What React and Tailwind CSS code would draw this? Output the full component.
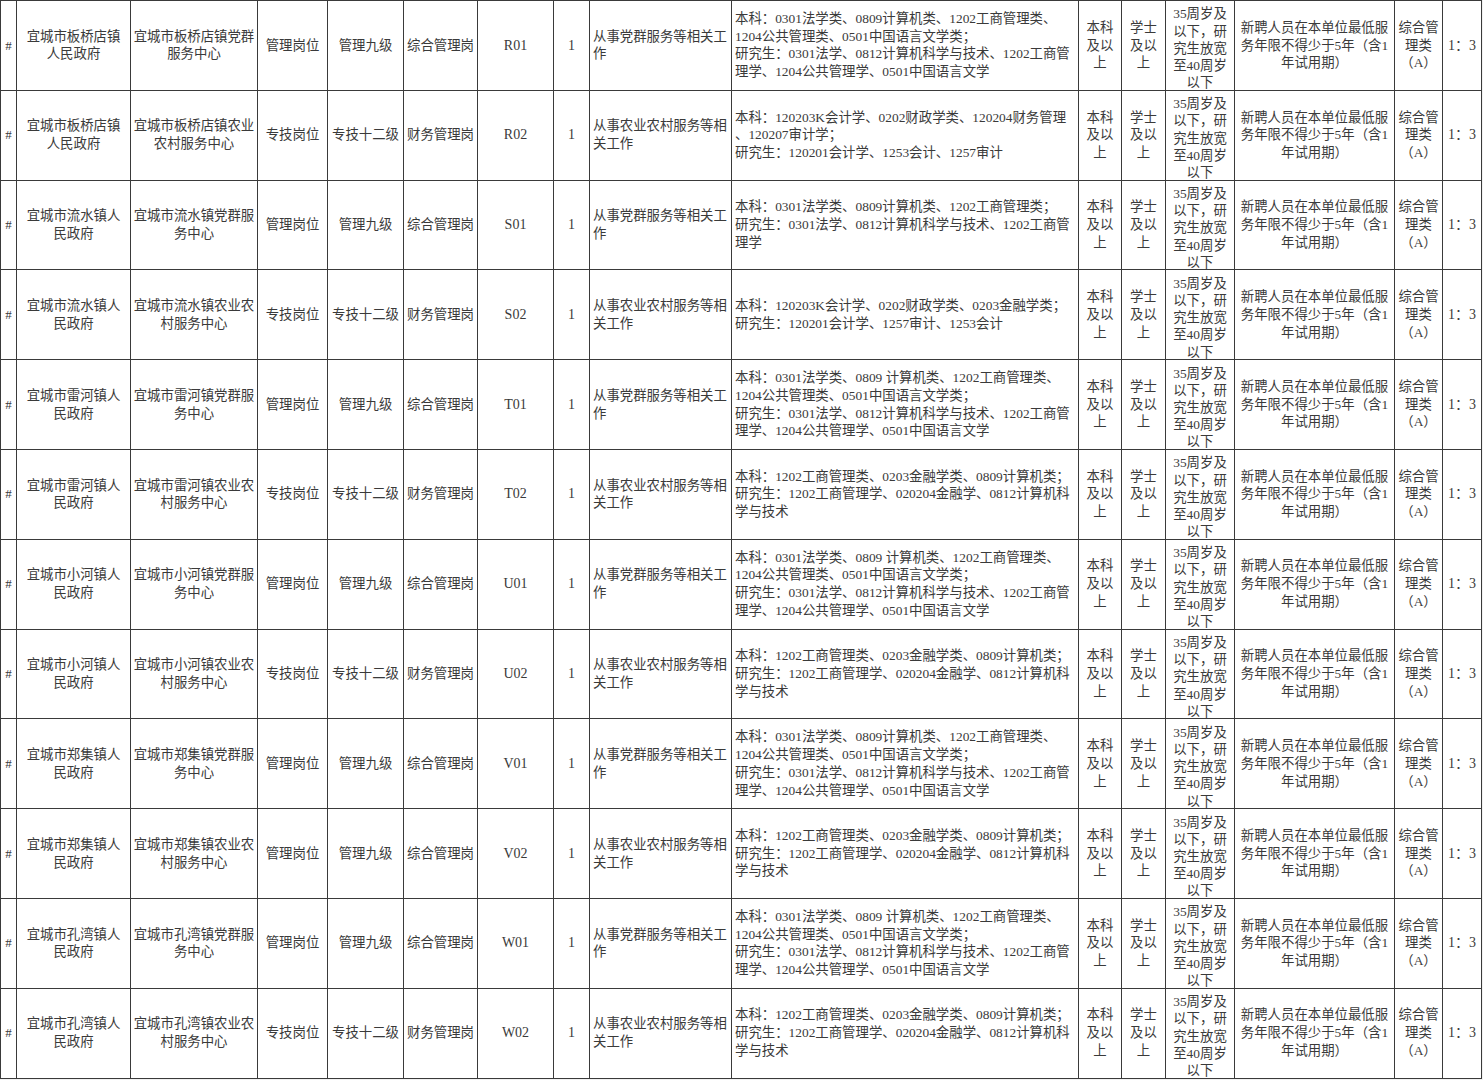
import React from "react";

const cols = [16, 114, 127, 70, 76, 74, 76, 36, 142, 347, 43, 44, 69, 160, 48, 39];

const REQ_A = [
  "本科：0301法学类、0809计算机类、1202工商管理类、",
  "1204公共管理类、0501中国语言文学类；",
  "研究生：0301法学、0812计算机科学与技术、1202工商管",
  "理学、1204公共管理学、0501中国语言文学",
];
const REQ_A2 = [
  "本科：0301法学类、0809 计算机类、1202工商管理类、",
  "1204公共管理类、0501中国语言文学类；",
  "研究生：0301法学、0812计算机科学与技术、1202工商管",
  "理学、1204公共管理学、0501中国语言文学",
];
const REQ_F = [
  "本科：1202工商管理类、0203金融学类、0809计算机类；",
  "研究生：1202工商管理学、020204金融学、0812计算机科",
  "学与技术",
];

const MGMT = ["管理岗位", "管理九级", "综合管理岗"];
const TECH = ["专技岗位", "专技十二级", "财务管理岗"];
const JOB_P = ["从事党群服务等相关工", "作"];
const JOB_F = ["从事农业农村服务等相", "关工作"];

const rows = [
  { unit: ["宜城市板桥店镇", "人民政府"], sub: ["宜城市板桥店镇党群", "服务中心"], post: MGMT, code: "R01", job: JOB_P, req: REQ_A },
  {
    unit: ["宜城市板桥店镇", "人民政府"],
    sub: ["宜城市板桥店镇农业", "农村服务中心"],
    post: TECH,
    code: "R02",
    job: JOB_F,
    req: ["本科：120203K会计学、0202财政学类、120204财务管理", "、120207审计学；", "研究生：120201会计学、1253会计、1257审计"],
  },
  {
    unit: ["宜城市流水镇人", "民政府"],
    sub: ["宜城市流水镇党群服", "务中心"],
    post: MGMT,
    code: "S01",
    job: JOB_P,
    req: ["本科：0301法学类、0809计算机类、1202工商管理类；", "研究生：0301法学、0812计算机科学与技术、1202工商管", "理学"],
  },
  {
    unit: ["宜城市流水镇人", "民政府"],
    sub: ["宜城市流水镇农业农", "村服务中心"],
    post: TECH,
    code: "S02",
    job: JOB_F,
    req: ["本科：120203K会计学、0202财政学类、0203金融学类；", "研究生：120201会计学、1257审计、1253会计"],
  },
  { unit: ["宜城市雷河镇人", "民政府"], sub: ["宜城市雷河镇党群服", "务中心"], post: MGMT, code: "T01", job: JOB_P, req: REQ_A2 },
  { unit: ["宜城市雷河镇人", "民政府"], sub: ["宜城市雷河镇农业农", "村服务中心"], post: TECH, code: "T02", job: JOB_F, req: REQ_F },
  { unit: ["宜城市小河镇人", "民政府"], sub: ["宜城市小河镇党群服", "务中心"], post: MGMT, code: "U01", job: JOB_P, req: REQ_A2 },
  { unit: ["宜城市小河镇人", "民政府"], sub: ["宜城市小河镇农业农", "村服务中心"], post: TECH, code: "U02", job: JOB_F, req: REQ_F },
  { unit: ["宜城市郑集镇人", "民政府"], sub: ["宜城市郑集镇党群服", "务中心"], post: MGMT, code: "V01", job: JOB_P, req: REQ_A },
  { unit: ["宜城市郑集镇人", "民政府"], sub: ["宜城市郑集镇农业农", "村服务中心"], post: MGMT, code: "V02", job: JOB_F, req: REQ_F },
  { unit: ["宜城市孔湾镇人", "民政府"], sub: ["宜城市孔湾镇党群服", "务中心"], post: MGMT, code: "W01", job: JOB_P, req: REQ_A2 },
  { unit: ["宜城市孔湾镇人", "民政府"], sub: ["宜城市孔湾镇农业农", "村服务中心"], post: TECH, code: "W02", job: JOB_F, req: REQ_F },
];

function Lines({ lines }) {
  return lines.map((l, i) => (
    <div key={i} className="whitespace-nowrap">
      {l}
    </div>
  ));
}

const td = "border border-[#3a3a3a] align-middle p-0";

export default function App() {
  return (
    <div
      className="w-[1483px] h-[1080px] bg-[#f1f1f1] text-[#3a3a3a] text-[13.4px] leading-[17.8px]"
      style={{ fontFamily: '"Liberation Serif", "Noto Sans CJK SC", serif' }}
    >
      <table className="table-fixed border-collapse bg-white w-[1481px]">
        <colgroup>
          {cols.map((w, i) => (
            <col key={i} style={{ width: w }} />
          ))}
        </colgroup>
        <tbody>
          {rows.map((r, idx) => (
            <tr key={idx} className="h-[89.8px]">
              <td className={`${td} text-center text-[13px]`}>#</td>
              <td className={`${td} text-center`}>
                <Lines lines={r.unit} />
              </td>
              <td className={`${td} text-center`}>
                <Lines lines={r.sub} />
              </td>
              <td className={`${td} text-center`}>{r.post[0]}</td>
              <td className={`${td} text-center whitespace-nowrap`}>{r.post[1]}</td>
              <td className={`${td} text-center`}>{r.post[2]}</td>
              <td className={`${td} text-center text-[14px]`}>{r.code}</td>
              <td className={`${td} text-center text-[14px]`}>1</td>
              <td className={`${td} pl-[3px]`}>
                <Lines lines={r.job} />
              </td>
              <td className={`${td} pl-[3px]`}>
                <Lines lines={r.req} />
              </td>
              <td className={`${td} text-center`}>
                <Lines lines={["本科", "及以", "上"]} />
              </td>
              <td className={`${td} text-center`}>
                <Lines lines={["学士", "及以", "上"]} />
              </td>
              <td className={`${td} text-center leading-[17.2px]`}>
                <div className="h-[84px] pt-[2px]">
                  <Lines lines={["35周岁及", "以下，研", "究生放宽", "至40周岁", "以下"]} />
                </div>
              </td>
              <td className={`${td} text-center`}>
                <Lines lines={["新聘人员在本单位最低服", "务年限不得少于5年（含1", "年试用期）"]} />
              </td>
              <td className={`${td} text-center`}>
                <Lines lines={["综合管", "理类", "（A）"]} />
              </td>
              <td className={`${td} text-center whitespace-nowrap text-[14px]`}>1：3</td>
            </tr>
          ))}
        </tbody>
      </table>
    </div>
  );
}
